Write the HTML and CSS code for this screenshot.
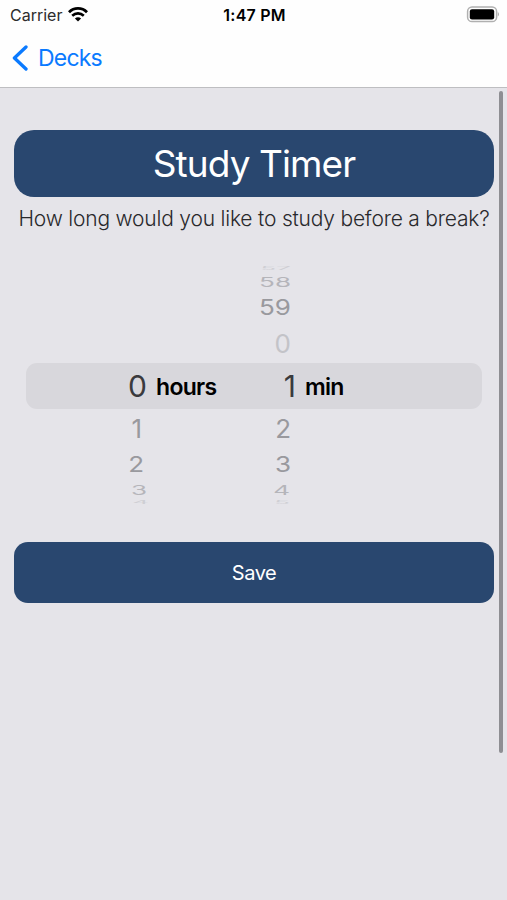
FILE: index.html
```
<!DOCTYPE html>
<html lang="en">
<head>
<meta charset="UTF-8">
<meta name="viewport" content="width=device-width, initial-scale=1">
<title>Study Timer</title>
<link rel="stylesheet" href="styles.css">
</head>
<body>
  <header class="top">
    <div class="status-bar">
      <div class="carrier">
        <span>Carrier</span>
        <svg class="wifi" viewBox="0 0 20 15" width="20" height="15">
          <path d="M1 5.2 C6 .2 14 .2 19 5.2" fill="none" stroke="#000" stroke-width="2.8"/>
          <path d="M4.2 8.8 C7.6 5.6 12.4 5.6 15.8 8.8" fill="none" stroke="#000" stroke-width="2.6"/>
          <path d="M6.9 11.4 C8.7 9.7 11.3 9.7 13.1 11.4 L10 14.6 Z" fill="#000"/>
        </svg>
      </div>
      <div class="time">1:47 PM</div>
      <svg class="battery" viewBox="0 0 34 17" width="34" height="17">
        <rect x="2.6" y="1" width="29" height="14.6" rx="4.4" fill="#fff" stroke="#b0b0b0" stroke-width="1.5"/>
        <rect x="4.8" y="3.2" width="24.4" height="10.2" rx="2.2" fill="#000"/>
        <path d="M32.8 6 C34.4 7 34.4 9.6 32.8 10.6 Z" fill="#b0b0b0"/>
      </svg>
    </div>
    <nav class="nav-bar">
      <a class="back" href="#">
        <svg viewBox="0 0 17 26" width="17" height="26">
          <path d="M14 2 L2.4 13 L14 24" fill="none" stroke="#0a7aff" stroke-width="3.3" stroke-linecap="round" stroke-linejoin="round"/>
        </svg>
        <span>Decks</span>
      </a>
    </nav>
  </header>

  <main class="content">
    <h1 class="title"><span>Study Timer</span></h1>
    <p class="question">How long would you like to study before a break?</p>

    <div class="picker">
      <div class="row edge"><span></span><span class="num">57</span></div>
      <div class="row far far-top"><span></span><span class="num">58</span></div>
      <div class="row mid"><span></span><span class="num">59</span></div>
      <div class="row near faded"><span></span><span class="num">0</span></div>
      <div class="row selected">
        <span class="num">0</span><span class="unit">hours</span>
        <span class="num">1</span><span class="unit">min</span>
      </div>
      <div class="row near next"><span class="num">1</span><span class="num">2</span></div>
      <div class="row mid"><span class="num">2</span><span class="num">3</span></div>
      <div class="row far far-bottom"><span class="num">3</span><span class="num">4</span></div>
      <div class="row edge edge-bottom"><span class="num">4</span><span class="num">5</span></div>
    </div>

    <button class="save"><span>Save</span></button>
  </main>

  <div class="scrollbar"></div>
</body>
</html>
```

FILE: styles.css
```
body {
  margin: 0;
  height: 900px;
  background-color: #e5e4e9;
  font-family: Inter, "Liberation Sans", sans-serif;
  overflow: hidden;
}

.top {
  box-sizing: border-box;
  height: 88px;
  background-color: #fefefe;
  border-bottom: 1px solid #bebec1;
}

.status-bar {
  display: grid;
  grid-template-columns: 1fr auto 1fr;
  align-items: center;
  height: 29px;
  padding: 0 8px 0 10px;
  font-size: 16px;
}

.carrier {
  display: flex;
  align-items: center;
  gap: 6px;
  color: #2c2c2c;
}

.time {
  font-weight: 600;
  letter-spacing: .2px;
}

.battery {
  justify-self: end;
}

.nav-bar {
  display: flex;
  align-items: center;
  height: 58px;
  padding-left: 12px;
}

.back {
  display: flex;
  align-items: center;
  gap: 9px;
  color: #0a7aff;
  font-size: 23px;
  letter-spacing: -.8px;
  text-decoration: none;
}

.content {
  padding: 42px 13px 0 14px;
}

.title {
  display: flex;
  align-items: center;
  justify-content: center;
  height: 67px;
  margin: 0;
  border-radius: 20px;
  background-color: #29476f;
  color: #fff;
  font-size: 37px;
  font-weight: 400;
  letter-spacing: -.9px;
}

.question {
  height: 44px;
  margin: 0;
  color: #29292c;
  font-size: 21px;
  font-weight: 300;
  letter-spacing: -.2px;
  line-height: 44px;
  text-align: center;
  white-space: nowrap;
}

.picker {
  margin: 24px 12px 0;
}

.row {
  display: grid;
  grid-template-columns: 118px 147px;
  align-items: center;
  color: #99999e;
  font-size: 26px;
  text-align: right;
}

.num {
  transform-origin: right center;
}

.selected {
  grid-template-columns: 121px 79px 70px 1fr;
  height: 46px;
  border-radius: 11px;
  background-color: #d8d7dc;
  color: #3a3a3d;
  font-size: 30px;
}

.unit {
  padding: 2px 0 0 9px;
  color: #000;
  font-size: 23px;
  font-weight: 600;
  letter-spacing: -.7px;
  text-align: left;
}

.near {
  height: 39px;
}

.next {
  grid-template-columns: 116px 149px;
}

.faded {
  color: #c3c3c8;
}

.mid {
  height: 33px;
  line-height: 33px;
}

.mid .num {
  transform: scaleY(.8);
}

.far {
  height: 18px;
  color: #b5b5ba;
  line-height: 18px;
}

.far .num {
  transform: scaleY(.5);
}

.far-top {
  line-height: 16px;
}

.far-bottom {
  grid-template-columns: 121px 143px;
}

/* the outermost rows are almost edge-on */
.edge {
  height: 8px;
  color: #cfcfd4;
  line-height: 8px;
}

.edge .num {
  transform: scaleY(.16);
}

.edge-bottom {
  grid-template-columns: 123px 141px;
}

.save {
  display: flex;
  align-items: center;
  justify-content: center;
  width: 100%;
  height: 61px;
  margin-top: 35px;
  padding: 0;
  border: none;
  border-radius: 14px;
  background-color: #29476f;
  color: #fff;
  font-family: inherit;
  font-size: 20px;
  letter-spacing: -.5px;
}

/* floats over the page like the native scroll indicator */
.scrollbar {
  position: absolute;
  top: 91px;
  right: 4px;
  width: 4px;
  height: 662px;
  border-radius: 2px;
  background-color: #8e8e93;
}
```
